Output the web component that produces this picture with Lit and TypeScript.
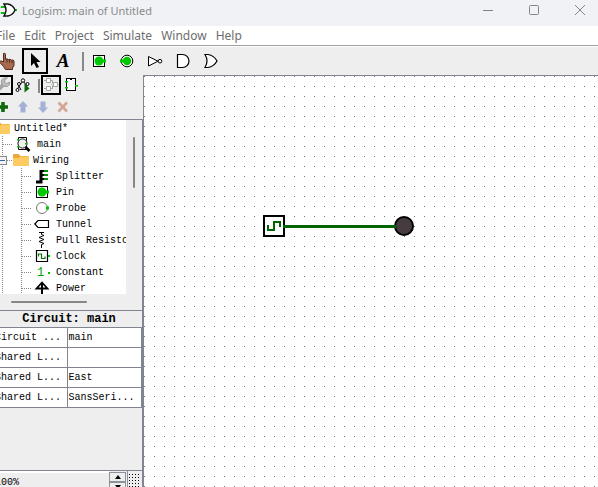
import { LitElement, html, svg, css, nothing } from "lit";
import { customElement, state } from "lit/decorators.js";

const GREEN = "#00c800";

const icon = (w: number, h: number, body: unknown) => html`
  <svg class="icon" width=${w} height=${h} viewBox="0 0 ${w} ${h}" fill="none" aria-hidden="true">${body}</svg>`;

const icons = {
  logo: () => icon(18, 18, svg`
    <path d="M1 5h5M1 11h5M14 8h3" stroke=${GREEN} stroke-width="2"/>
    <path d="M4 2h4q5 1 7 6q-2 5-7 6h-4q4-6 0-12z" fill="#fff" stroke="#111" stroke-width="1.4"/>`),
  poke: () => icon(18, 18, svg`
    <path d="M5.5 1.500q1.700-1 2 .8v5.200l1.500-.7l1.500.8l1.500-.4l1.500.9q2-.6 2.500 1v4.400l-1.500 2.500v1.500h-7l-2-3l-4-4.500q.5-1.500 2-1l2 1z" fill="#a8694e" stroke="#4e2c1e"/>
    <path d="M9 7.500v3M11.500 8v2.500M14 9v2" stroke="#4e2c1e"/>`),
  select: () => icon(16, 18, svg`
    <path d="M4 1v13l3-3l2.500 5l2.500-1l-2.500-5h4z" fill="#000"/>`),
  pinIn: () => icon(16, 16, svg`
    <path d="M2.500 2.500h11v11h-11z" fill="#fff" stroke="#000" shape-rendering="crispEdges"/>
    <circle cx="8" cy="8" r="4.500" fill=${GREEN}/><path d="M11 6.500h4v3h-4z" fill=${GREEN}/>`),
  pinOut: () => icon(16, 16, svg`
    <circle cx="8" cy="8" r="5.800" fill="#fff" stroke="#000"/>
    <circle cx="8" cy="8" r="4.200" fill=${GREEN}/><path d="M1 6.500h4v3h-4z" fill=${GREEN}/>`),
  not: () => icon(16, 16, svg`
    <path d="M1.500 3.500v9.500l9.500-4.800z" fill="#fff" stroke="#000"/><circle cx="13" cy="8.200" r="1.800" fill="#fff" stroke="#000"/>`),
  and: () => icon(16, 16, svg`
    <path d="M2.500 1.500h5a6.500 6.500 0 0 1 0 13h-5z" fill="#fff" stroke="#000" stroke-width="1.200"/>`),
  or: () => icon(16, 16, svg`
    <path d="M2 1.500h3q6 1 9 6.500q-3 5.500-9 6.500h-3q4-6.500 0-13z" fill="#fff" stroke="#000" stroke-width="1.200"/>`),
  wrench: () => icon(16, 16, svg`
    <path d="M3 13l6-6" stroke="#a5a5a5" stroke-width="4" stroke-linecap="round"/>
    <path d="M14.500 5l-3 1.500l-2-1.500l.5-2l2.500-2q-5-1-6 3q-.5 5.500 4.500 5.500q4 0 3.500-4.500z" fill="#bcbcbc" stroke="#9d9d9d"/>`),
  hierarchy: () => icon(16, 16, svg`
    <path d="M8 4l-4 5l-2 4M4 9l2 4M8 4l4 5" stroke="#000"/>
    <g fill="#fff" stroke="#000"><circle cx="8" cy="3.500" r="1.700"/><circle cx="4" cy="7" r="1.500"/><circle cx="12.500" cy="7" r="1.500"/><circle cx="2.500" cy="13" r="1.500"/></g>
    <path d="M9.500 6.500l5 5l-5 4z" fill="#0a6b0a"/>`),
  layout: () => icon(16, 16, svg`
    <g stroke="#a3a79f"><path d="M3.500 1.500h4v4h-4zM3.500 9.500h4v4h-4zM10.500 5.500h4v4h-4z" fill="#fff"/>
    <path d="M8 3.500h1.500v3h1M8 11.500h1.500v-3h1M1 3.500h2M1 11.500h2"/></g>
    <path d="M8 7h1v1h-1zM15 7h1v1h-1z" fill="#a9d3a9"/>`),
  chip: () => icon(16, 16, svg`
    <path d="M3.500 1.500h9v12h-9z" fill="#fff" stroke="#000" shape-rendering="crispEdges"/><path d="M6.500 1.500q1.500 3 3 0" stroke="#000"/>
    <path d="M2 4h3v1.500h-3zM2 10h3v1.500h-3zM12 8h3v1.500h-3z" fill=${GREEN}/>`),
  add: () => icon(14, 14, svg`<path d="M7 2v10M2 7h10" stroke="#0b6a0b" stroke-width="3.600"/>`),
  up: () => icon(14, 14, svg`<path d="M7 1l5 5.500h-2.500v6h-5v-6h-2.500z" fill="#a3b1d6"/>`),
  down: () => icon(14, 14, svg`<path d="M7 13l5-5.500h-2.500v-6h-5v6h-2.500z" fill="#a3b1d6"/>`),
  remove: () => icon(14, 14, svg`<path d="M2.500 2.500l8.500 9M11 2.500l-8.500 9" stroke="#d5a596" stroke-width="2.600"/>`),
  folder: () => icon(16, 16, svg`
    <path d="M0 3q0-1 1-1h4.500l2 2h7.500q1 0 1 1v2h-16z" fill="#e9a93a"/>
    <path d="M0 6h6l1.500-1.500h8.500v8.500q0 1-1 1h-14q-1 0-1-1z" fill="#fccb62"/>`),
  circuit: () => icon(16, 16, svg`
    <path d="M3.500 1.500h8v12h-8z" fill="#fff" stroke="#000"/>
    <circle cx="7.500" cy="7.500" r="4.600" fill="#eee" fill-opacity=".9" stroke="#222"/>
    <path d="M2 3h2v1.500h-2zM2 10h2v1.500h-2zM10 7h2v1.500h-2z" fill=${GREEN}/>
    <path d="M10.500 11l4 4" stroke="#000" stroke-width="2.600"/>`),
  splitter: () => icon(16, 16, svg`
    <path d="M2 14h5v-12" stroke="#000" stroke-width="3"/>
    <path d="M7 3h3M7 7h3M7 11h3" stroke="#000" stroke-width="2"/><path d="M10 3h4M10 7h4M10 11h4" stroke="#078a07" stroke-width="2"/>`),
  pin: () => icon(16, 16, svg`
    <path d="M2.500 2.500h11v11h-11z" fill="#fff" stroke="#000" shape-rendering="crispEdges"/>
    <circle cx="8" cy="8" r="4.500" fill=${GREEN}/><path d="M11 6.500h4v3h-4z" fill=${GREEN}/>`),
  probe: () => icon(16, 16, svg`
    <circle cx="8" cy="8" r="5.500" fill="#fff" stroke="#777"/><path d="M12 6.500h3v3h-3z" fill=${GREEN}/>`),
  tunnel: () => icon(16, 16, svg`<path d="M.8 8l3.200-3.500h10.500v7h-10.500z" fill="#fff" stroke="#000" stroke-width="1.200"/>`),
  resistor: () => icon(16, 16, svg`
    <path d="M5 .5h5M7.500 0v2.500l2.500 1l-5 2l5 2l-5 2l5 2l-2.500 1v3.500" stroke="#000"/>`),
  clock: () => icon(16, 16, svg`
    <path d="M2.500 2.500h11v11h-11z" fill="#fff" stroke="#000" stroke-width="1.200"/>
    <path d="M4.500 8.500v-2.500h3v4.500h3.500v-2" stroke="#067506" stroke-width="1.200"/><path d="M14 7h2v2h-2z" fill=${GREEN}/>`),
  constant: () => icon(16, 16, svg`
    <text x="3" y="12" class="one">1</text><path d="M14 8h2v2h-2z" fill=${GREEN}/>`),
  power: () => icon(16, 16, svg`
    <path d="M2.500 8.500l5.500-6l5.500 6z" fill="#fff" stroke="#000" stroke-width="1.800"/><path d="M8 3v13" stroke="#000" stroke-width="2"/>`),
  minimize: () => icon(12, 12, svg`<path d="M1 5.500h10" stroke="#858585"/>`),
  maximize: () => icon(12, 12, svg`<rect x="1.500" y=".5" width="9" height="9" rx="1" stroke="#858585"/>`),
  close: () => icon(12, 12, svg`<path d="M1 0l10 10M11 0l-10 10" stroke="#858585"/>`),
  grid: () => icon(12, 14, svg`
    <defs><pattern id="g" width="3" height="3" patternUnits="userSpaceOnUse"><rect width="1" height="1" fill="#000"/></pattern></defs>
    <rect width="12" height="14" fill="url(#g)"/>`),
  spinUp: () => icon(6, 4, svg`<path d="M3 0l3 4h-6z" fill="#000"/>`),
  spinDown: () => icon(6, 4, svg`<path d="M3 4l3-4h-6z" fill="#000"/>`),
};

type IconName = keyof typeof icons;

interface TreeItem { label: string; icon: IconName; depth: number }

const TREE: TreeItem[] = [
  { label: "Untitled*", icon: "folder", depth: 0 },
  { label: "main", icon: "circuit", depth: 1 },
  { label: "Wiring", icon: "folder", depth: 1 },
  { label: "Splitter", icon: "splitter", depth: 2 },
  { label: "Pin", icon: "pin", depth: 2 },
  { label: "Probe", icon: "probe", depth: 2 },
  { label: "Tunnel", icon: "tunnel", depth: 2 },
  { label: "Pull Resistor", icon: "resistor", depth: 2 },
  { label: "Clock", icon: "clock", depth: 2 },
  { label: "Constant", icon: "constant", depth: 2 },
  { label: "Power", icon: "power", depth: 2 },
];

const ATTRIBUTES = [
  ["Circuit ...", "main"],
  ["Shared L...", ""],
  ["Shared L...", "East"],
  ["Shared L...", "SansSeri..."],
];

const TOOLS: { id: IconName | "text" | "sep"; label: string }[] = [
  { id: "poke", label: "Poke tool" },
  { id: "select", label: "Edit tool" },
  { id: "text", label: "Text tool" },
  { id: "sep", label: "" },
  { id: "pinIn", label: "Input pin" },
  { id: "pinOut", label: "Output pin" },
  { id: "not", label: "NOT gate" },
  { id: "and", label: "AND gate" },
  { id: "or", label: "OR gate" },
];

@customElement("tool-explorer")
class ToolExplorer extends LitElement {
  static styles = css`
    :host { display: grid; grid-template-columns: 1fr 16px; grid-template-rows: 174px 16px; background: #eee; }
    .list { margin: 0; padding: 0; list-style: none; background: #fff; overflow: hidden; }
    .item { display: flex; height: 16px; align-items: center; white-space: nowrap; }
    .icon, .lead { flex: none; display: block; }
    .label { padding: 2px 0 0 6px; font: 10px/14px "Liberation Mono", monospace; color: #000; }
    .folder { padding-left: 4px; }
    .one { font: 12px "Liberation Mono", monospace; fill: #00a000; }
    .track { display: flex; padding: 17px 7px 0; }
    .track.across { padding: 7px 0 0 19px; }
    .thumb { width: 2px; height: 51px; border-radius: 1px; background: #8b8686; }
    .across .thumb { width: 76px; height: 2px; }
  `;

  private lead(item: TreeItem) {
    if (item.depth === 0) return html`<svg class="lead" width="2" height="16"></svg>`;
    const open = item.depth === 1 && item.icon === "folder";
    const width = item.depth === 2 ? 42 : open ? 21 : 23;
    return html`
      <svg class="lead" width=${width} height="16" fill="none" stroke="#888" shape-rendering="crispEdges">
        <path d="M10.5 0v16" stroke-dasharray="1 1"/>
        ${item.depth === 2 ? svg`<path d="M29.500 0v16M30 8.500h9" stroke-dasharray="1 1"/>` : svg`<path d="M11 8.500h9" stroke-dasharray="1 1"/>`}
        ${open ? svg`<rect x="4.500" y="4.500" width="10" height="8" fill="#f4f4f4"/><path d="M6 8.500h7" stroke="#3465a4"/>` : nothing}
      </svg>`;
  }

  render() {
    return html`
      <ul class="list">
        ${TREE.map(item => html`
          <li class="item">${this.lead(item)}${icons[item.icon]()}<span class="label ${item.icon === "folder" ? "folder" : ""}">${item.label}</span></li>`)}
      </ul>
      <div class="track"><div class="thumb"></div></div>
      <div class="track across"><div class="thumb"></div></div>`;
  }
}

@customElement("circuit-canvas")
class CircuitCanvas extends LitElement {
  static styles = css`
    :host { display: block; background: #fff; overflow: hidden; min-width: 0; }
    .sheet { display: block; width: 100%; height: 100%; }
  `;

  render() {
    return html`
      <svg class="sheet" role="img" aria-label="Clock wired to an LED">
        <defs><pattern id="dots" width="10" height="10" patternUnits="userSpaceOnUse"><rect width="1" height="1" fill="#777"/></pattern></defs>
        <rect width="100%" height="100%" fill="url(#dots)"/>
        <rect x="120" y="140" width="20" height="20" fill="#fff" stroke="#000" stroke-width="2"/>
        <path d="M124 149v5h6v-8h6v5" fill="none" stroke="#006400" stroke-width="2"/>
        <circle cx="260" cy="150" r="9" fill="#463c40" stroke="#000" stroke-width="2"/>
        <path d="M139 150.500h113" stroke="#006400" stroke-width="3"/>
      </svg>`;
  }
}

@customElement("app-root")
class AppRoot extends LitElement {
  static styles = css`
    :host { display: block; height: 100vh; overflow: hidden; background: #eee; }
    button { border: 0; padding: 0; background: none; font: inherit; color: inherit; display: flex; align-items: center; justify-content: center; }
    .icon { display: block; flex: none; }
    .window { display: flex; flex-direction: column; height: 100%; margin: 0 -5px 0 -8px; font-family: "Noto Sans", sans-serif; }
    .title { display: flex; background: #f0f2f5; height: 26px; flex: none; }
    .name { flex: 1; display: flex; align-items: center; gap: 4px; padding: 0 0 4px 8px; font-size: 11px; line-height: 16px; color: #8a8a8a; }
    .control { width: 46px; height: 22px; }
    .menu { display: flex; flex: none; gap: 9px; padding-left: 4px; height: 19px; background: #fff; border-bottom: 1px solid #a0a0a0; font-size: 12px; line-height: 19px; color: #6d6d6d; }
    .tools { display: flex; flex: none; padding: 1px 0 0 1px; border-top: 1px solid #fff; height: 29px; box-sizing: border-box; }
    .tool { width: 28px; height: 26px; box-sizing: border-box; }
    .small { width: 20px; height: 20px; box-sizing: border-box; }
    .active { border: 2px solid #000; }
    .tool.active { width: 26px; margin: 0 1px; }
    .letter { font: italic bold 19px/24px "Liberation Serif", serif; color: #000; }
    .rule { width: 2px; margin: 4px 1px 4px 5px; background: #888; }
    .body { flex: 1; display: grid; grid-template-columns: 151px minmax(0, 1fr); min-height: 0; }
    .side { display: flex; flex-direction: column; min-width: 0; min-height: 0; overflow: hidden; }
    .sheet { border: solid #80858f; border-width: 1px 0 0 1px; }
    .row { display: flex; flex: none; height: 22px; padding-left: 1px; align-items: flex-start; }
    .row .rule { height: 14px; }
    .explorer { flex: none; border: solid #80858f; border-width: 1px 1px 0 0; }
    .attributes { flex: 1; min-height: 0; border: solid #80858f; border-width: 1px 1px 0 0; }
    .heading { margin: 0; padding: 0 0 0 4px; text-align: center; font: bold 12px/16px "Liberation Mono", monospace; color: #000; }
    .data { width: 100%; table-layout: fixed; border-collapse: collapse; background: #fff; font: 10px/19px "Liberation Mono", monospace; color: #000; }
    .key, .value { box-sizing: border-box; height: 20px; padding: 0 0 0 1px; border: 1px solid #80858f; text-align: left; font-weight: normal; white-space: nowrap; }
    .key { width: 50%; padding-left: 2px; }
    .status { display: flex; flex: none; height: 16px; border-top: 1px solid #80858f; border-right: 1px solid #80858f; overflow: hidden; }
    .zoom { flex: 1; min-width: 0; height: 20px; box-sizing: border-box; padding: 0 0 0 3px; border: 0; border-top: 2px solid #fff; background: #eee; font: 10px/18px "Liberation Mono", monospace; color: #000; }
    .spin { display: flex; flex-direction: column; width: 17px; margin-top: 1px; }
    .step { flex: none; height: 10px; border: 1px solid #8d929a; box-sizing: border-box; }
    .toggle { width: 15px; height: 20px; border-left: 1px solid #8d929a; margin-left: 1px; }
  `;

  @state() private tool = "select";

  render() {
    return html`
      <div class="window">
        <header class="title">
          <div class="name">${icons.logo()}<span>Logisim: main of Untitled</span></div>
          <button class="control" aria-label="Minimize">${icons.minimize()}</button>
          <button class="control" aria-label="Maximize">${icons.maximize()}</button>
          <button class="control" aria-label="Close">${icons.close()}</button>
        </header>
        <nav class="menu">
          ${["File", "Edit", "Project", "Simulate", "Window", "Help"].map(m => html`<button>${m}</button>`)}
        </nav>
        <div class="tools" role="toolbar">
          ${TOOLS.map(t => t.id === "sep"
            ? html`<span class="rule"></span>`
            : html`<button class="tool ${this.tool === t.id ? "active" : ""}" aria-label=${t.label} @click=${() => (this.tool = t.id)}>
                ${t.id === "text" ? html`<span class="letter">A</span>` : icons[t.id]()}
              </button>`)}
        </div>
        <div class="body">
          <aside class="side">
            <div class="row">
              <button class="small active" aria-label="Show tools">${icons.wrench()}</button>
              <button class="small" aria-label="Show simulation">${icons.hierarchy()}</button>
              <span class="rule"></span>
              <button class="small active" aria-label="Edit layout">${icons.layout()}</button>
              <button class="small" aria-label="Edit appearance">${icons.chip()}</button>
            </div>
            <div class="row">
              <button class="small" aria-label="Add circuit">${icons.add()}</button>
              <button class="small" aria-label="Move up">${icons.up()}</button>
              <button class="small" aria-label="Move down">${icons.down()}</button>
              <button class="small" aria-label="Remove circuit">${icons.remove()}</button>
            </div>
            <tool-explorer class="explorer"></tool-explorer>
            <section class="attributes">
              <h2 class="heading">Circuit: main</h2>
              <table class="data">
                ${ATTRIBUTES.map(([k, v]) => html`<tr><th class="key" scope="row">${k}</th><td class="value">${v}</td></tr>`)}
              </table>
            </section>
            <div class="status">
              <input class="zoom" type="text" aria-label="Zoom" .value=${"100%"}>
              <div class="spin">
                <button class="step" aria-label="Zoom in">${icons.spinUp()}</button>
                <button class="step" aria-label="Zoom out">${icons.spinDown()}</button>
              </div>
              <button class="toggle" aria-label="Toggle grid">${icons.grid()}</button>
            </div>
          </aside>
          <circuit-canvas class="sheet"></circuit-canvas>
        </div>
      </div>`;
  }
}
